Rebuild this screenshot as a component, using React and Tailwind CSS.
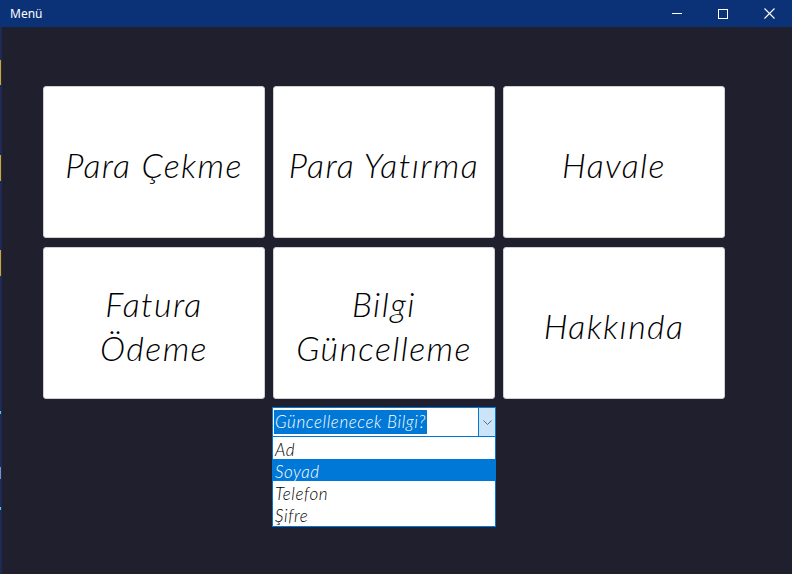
import React from "react";

const cardFont = { fontFamily: "Lato, 'Open Sans', sans-serif" };

function Card({ children }) {
  return (
    <div
      className="flex items-center justify-center rounded-[3px] border border-[#cfcfd4] bg-white pt-[5px] text-center text-[34px] font-light italic leading-[44px] tracking-[1.4px] text-black"
      style={cardFont}
    >
      <div>{children}</div>
    </div>
  );
}

export default function App() {
  const items = ["Ad", "Soyad", "Telefon", "Şifre"];
  return (
    <div
      className="relative flex h-[574px] w-[792px] flex-col overflow-hidden bg-[#201f2d]"
      style={{ fontFamily: "'Noto Sans', sans-serif" }}
    >
      {/* title bar */}
      <div className="flex h-[27px] shrink-0 items-center bg-[#0b3276] text-white">
        <div className="pl-[10px] text-[12px] leading-none">Menü</div>
        <div className="ml-auto flex h-full items-center">
          <div className="flex h-full w-[46px] items-center justify-center">
            <div className="h-px w-[10px] bg-white" />
          </div>
          <div className="flex h-full w-[46px] items-center justify-center">
            <div className="h-[10px] w-[10px] border border-white" />
          </div>
          <div className="flex h-full w-[46px] items-center justify-center">
            <svg width="11" height="11" viewBox="0 0 11 11">
              <path d="M0.5 0.5 L10.5 10.5 M10.5 0.5 L0.5 10.5" stroke="white" strokeWidth="1.1" />
            </svg>
          </div>
        </div>
      </div>

      {/* left edge */}
      <div className="absolute left-0 top-[27px] h-[547px] w-[2px] bg-[#1c2a55]">
        <div className="absolute left-0 top-[33px] h-[25px] w-px bg-[#d9a520]" />
        <div className="absolute left-0 top-[128px] h-[26px] w-px bg-[#d9a520]" />
        <div className="absolute left-0 top-[223px] h-[26px] w-px bg-[#d9a520]" />
        <div className="absolute left-0 top-[384px] h-[3px] w-px bg-[#5fc1e0]" />
        <div className="absolute left-0 top-[440px] h-[12px] w-px bg-[#7a8fc0]" />
        <div className="absolute left-0 top-[480px] h-[3px] w-px bg-[#5fc1e0]" />
      </div>

      <div className="flex flex-col pl-[43px] pt-[59px]">
        <div className="grid grid-cols-[222px_222px_222px] grid-rows-[152px_152px] gap-x-[8px] gap-y-[9px]">
          <Card>Para Çekme</Card>
          <Card>Para Yatırma</Card>
          <Card>Havale</Card>
          <Card>
            Fatura
            <br />
            Ödeme
          </Card>
          <Card>
            Bilgi
            <br />
            Güncelleme
          </Card>
          <Card>Hakkında</Card>
        </div>

        {/* combo */}
        <div
          className="ml-[229px] mt-[8px] w-[224px] text-[17px] font-light italic tracking-[0.6px]"
          style={cardFont}
        >
          <div className="flex h-[30px] border border-[#0078d7] bg-white">
            <div className="flex flex-1 items-center pl-[1px]">
              <span className="bg-[#0078d7] px-[1px] leading-[24px] text-white">Güncellenecek Bilgi?</span>
            </div>
            <div className="flex w-[17px] items-center justify-center border-l border-[#0078d7] bg-[#cce4f7]">
              <svg width="9" height="5" viewBox="0 0 9 5">
                <path d="M0.5 0.5 L4.5 4.5 L8.5 0.5" fill="none" stroke="#5a6a7a" strokeWidth="1" />
              </svg>
            </div>
          </div>
          <div className="border border-t-0 border-[#0078d7] bg-white pb-px">
            {items.map((it) => (
              <div
                key={it}
                className={
                  "h-[22px] pl-[2px] pt-[2px] leading-[22px] " +
                  (it === "Soyad" ? "bg-[#0078d7] text-white" : "text-black")
                }
              >
                {it}
              </div>
            ))}
          </div>
        </div>
      </div>
    </div>
  );
}
